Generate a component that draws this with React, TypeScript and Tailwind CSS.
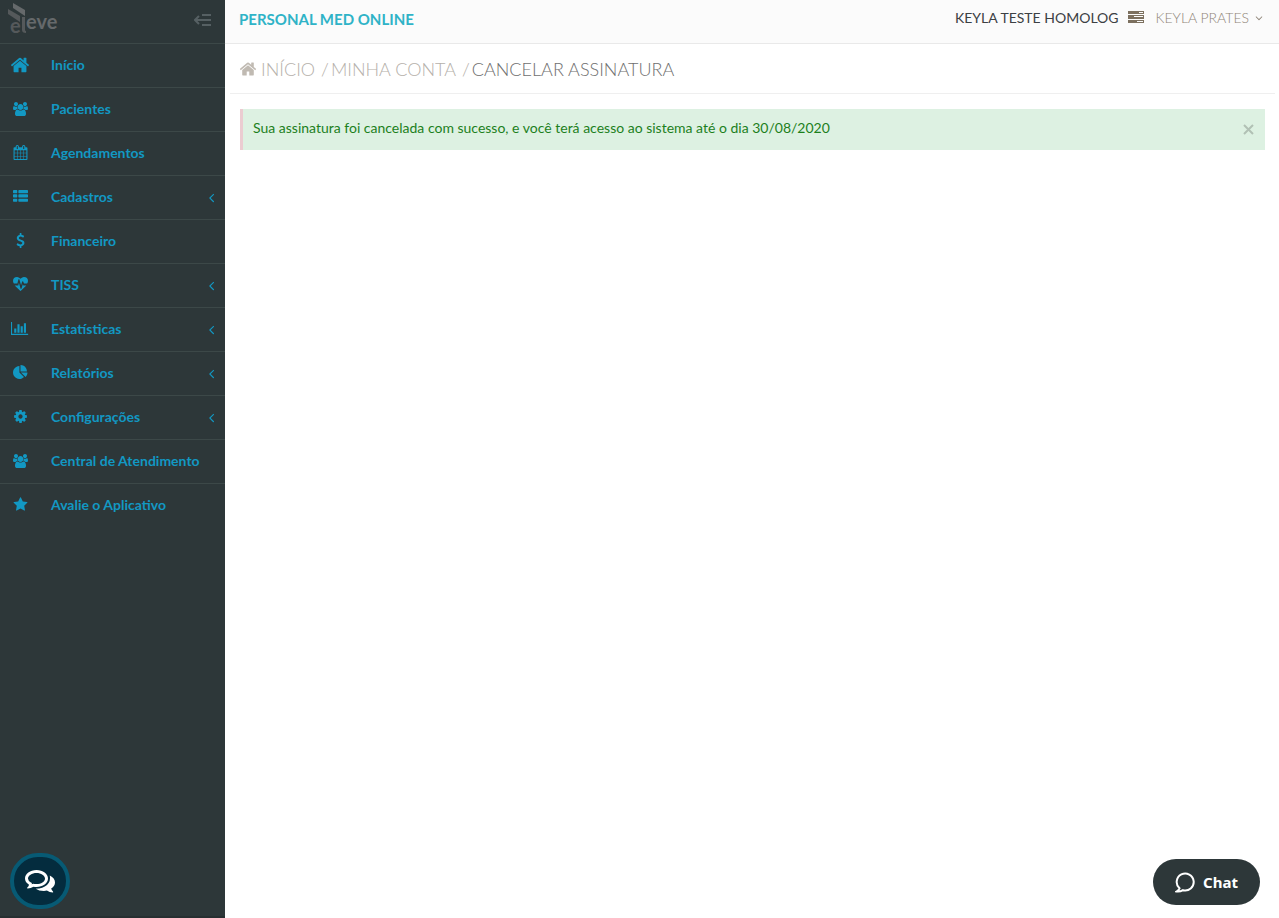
import clsx from 'clsx';

interface IconProps {
	path: string;
	width?: number;
	className?: string;
}

interface NavItem {
	label: string;
	icon: string;
	iconWidth?: number;
	iconClass?: string;
	expandable?: boolean;
}

const HOME =
	'M1472 992v480q0 26-19 45t-45 19h-384v-384h-256v384h-384q-26 0-45-19t-19-45v-480q0-1 .5-3t.5-3l575-474 575 474q1 2 1 6zm223-69l-62 74q-8 9-21 11h-3q-13 0-21-7l-692-577-692 577q-12 8-24 7-13-2-21-11l-62-74q-8-10-7-23.5t11-21.5l719-599q32-26 76-26t76 26l244 204v-195q0-14 9-23t23-9h192q14 0 23 9t9 23v408l219 182q10 8 11 21.5t-7 23.5z';
const USERS =
	'M593 896q-162 5-265 128h-134q-82 0-138-40.5t-56-118.5q0-353 124-353 6 0 43.5 21t97.5 42.5 119 21.5q67 0 133-23-5 37-5 66 0 139 81 256zm1071 637q0 120-73 189.5t-194 69.5h-874q-121 0-194-69.5t-73-189.5q0-53 3.5-103.5t14-109 26.5-108.5 43-97.5 62-81 85.5-53.500 111.500-20q10 0 43 21.500t73 48 107 48 135 21.500 135-21.500 107-48 73-48 43-21.500q61 0 111.500 20t85.500 53.500 62 81 43 97.500 26.500 108.500 14 109 3.500 103.500zm-1024-1277q0 106-75 181t-181 75-181-75-75-181 75-181 181-75 181 75 75 181zm704 384q0 159-112.500 271.500t-271.500 112.500-271.500-112.500-112.500-271.500 112.500-271.500 271.500-112.500 271.500 112.500 112.500 271.500zm576 225q0 78-56 118.500t-138 40.500h-134q-103-123-265-128 81-117 81-256 0-29-5-66 66 23 133 23 59 0 119-21.500t97.500-42.500 43.500-21q124 0 124 353zm-128-609q0 106-75 181t-181 75-181-75-75-181 75-181 181-75 181 75 75 181z';
const CALENDAR =
	'M192 1664h288v-288h-288v288zm352 0h320v-288h-320v288zm-352-352h288v-320h-288v320zm352 0h320v-320h-320v320zm-352-384h288v-288h-288v288zm736 736h320v-288h-320v288zm-384-736h320v-288h-320v288zm768 736h288v-288h-288v288zm-384-352h320v-320h-320v320zm-352-864v-288q0-13-9.5-22.5t-22.5-9.5h-64q-13 0-22.5 9.5t-9.5 22.5v288q0 13 9.5 22.5t22.5 9.5h64q13 0 22.5-9.5t9.5-22.5zm736 864h288v-320h-288v320zm-384-384h320v-288h-320v288zm384 0h288v-288h-288v288zm32-480v-288q0-13-9.5-22.5t-22.5-9.5h-64q-13 0-22.5 9.5t-9.5 22.5v288q0 13 9.5 22.5t22.5 9.5h64q13 0 22.5-9.5t9.5-22.5zm384-64v1280q0 52-38 90t-90 38h-1408q-52 0-90-38t-38-90v-1280q0-52 38-90t90-38h128v-96q0-66 47-113t113-47h64q66 0 113 47t47 113v96h384v-96q0-66 47-113t113-47h64q66 0 113 47t47 113v96h128q52 0 90 38t38 90z';
const LIST =
	'M512 1248v192q0 40-28 68t-68 28h-320q-40 0-68-28t-28-68v-192q0-40 28-68t68-28h320q40 0 68 28t28 68zm0-512v192q0 40-28 68t-68 28h-320q-40 0-68-28t-28-68v-192q0-40 28-68t68-28h320q40 0 68 28t28 68zm1280 512v192q0 40-28 68t-68 28h-960q-40 0-68-28t-28-68v-192q0-40 28-68t68-28h960q40 0 68 28t28 68zm-1280-1024v192q0 40-28 68t-68 28h-320q-40 0-68-28t-28-68v-192q0-40 28-68t68-28h320q40 0 68 28t28 68zm1280 512v192q0 40-28 68t-68 28h-960q-40 0-68-28t-28-68v-192q0-40 28-68t68-28h960q40 0 68 28t28 68zm0-512v192q0 40-28 68t-68 28h-960q-40 0-68-28t-28-68v-192q0-40 28-68t68-28h960q40 0 68 28t28 68z';
const DOLLAR =
	'M1362 1185q0 153-99.5 263.5t-258.5 136.5v175q0 14-9 23t-23 9h-135q-13 0-22.5-9.5t-9.5-22.5v-175q-66-9-127.5-31t-101.5-44.5-74-48-46.5-37.5-17.5-18q-17-21-2-41l103-135q7-10 23-12 15-2 24 9l2 2q113 99 243 125 37 8 74 8 81 0 142.5-43t61.5-122q0-28-15-53t-33.5-42-58.5-37.5-66-32-80-32.5q-39-16-61.5-25t-61.5-26.5-62.5-31-56.5-35.5-53.5-42.5-43.5-49-35.5-58-21-66.5-8.5-78q0-138 98-242t255-134v-180q0-13 9.5-22.5t22.5-9.5h135q14 0 23 9t9 23v176q57 6 110.5 23t87 33.5 63.5 37.5 39 29 15 14q17 18 5 38l-81 146q-8 15-23 16-14 3-27-7-3-3-14.5-12t-39-26.5-58.5-32-74.5-26-85.5-11.5q-95 0-155 43t-60 111q0 26 8.5 48t29.5 41.5 39.5 33 56 31 60.5 27 70 27.5q53 20 81 31.5t76 35 75.5 42.5 62 50 53 63.5 31.5 76.5 13 94z';
const HEARTBEAT =
	'M1280 1024h305q-5 6-10 10.5t-9 7.5l-3 4-623 600q-18 18-44 18t-44-18l-624-602q-5-2-21-20h369q22 0 39.5-13.5t22.5-34.5l70-281 190 667q6 20 23 33t39 13q21 0 38-13t23-33l146-485 56 112q18 35 57 35zm512-556q0 145-103 300h-369l-111-221q-8-17-25.5-27t-36.5-8q-45 5-56 46l-129 430-196-686q-6-20-23.5-33t-39.5-13-39 13.5-22 34.5l-116 464h-423q-103-155-103-300 0-220 127-344t351-124q62 0 126.5 21.5t120 58 95.5 68.5 76 68q36-36 76-68t95.5-68.5 120-58 126.5-21.5q224 0 351 124t127 344z';
const BAR_CHART =
	'M640 896v512h-256v-512h256zm384-512v1024h-256v-1024h256zm1024 1152v128h-2048v-1536h128v1408h1920zm-640-896v768h-256v-768h256zm384-384v1152h-256v-1152h256z';
const PIE_CHART =
	'M768 890l546 546q-106 108-247.5 168t-298.5 60q-209 0-385.5-103t-279.5-279.5-103-385.5 103-385.5 279.5-279.5 385.5-103v762zm187 6h773q0 157-60 298.5t-168 247.5zm709-128h-768v-768q209 0 385.5 103t279.5 279.5 103 385.5z';
const COG =
	'M1152 896q0-106-75-181t-181-75-181 75-75 181 75 181 181 75 181-75 75-181zm512-109v222q0 12-8 23t-20 13l-185 28q-19 54-39 91 35 50 107 138 10 12 10 25t-9 23q-27 37-99 108t-94 71q-12 0-26-9l-138-108q-44 23-91 38-16 136-29 186-7 28-36 28h-222q-14 0-24.5-8.5t-11.5-21.5l-28-184q-49-16-90-37l-141 107q-10 9-25 9-14 0-25-11-126-114-165-168-7-10-7-23 0-12 8-23 15-21 51-66.5t54-70.5q-27-50-41-99l-183-27q-13-2-21-12.5t-8-23.5v-222q0-12 8-23t19-13l186-28q14-46 39-92-40-57-107-138-10-12-10-24 0-10 9-23 26-36 98.5-107.5t94.5-71.5q13 0 26 10l138 107q44-23 91-38 16-136 29-186 7-28 36-28h222q14 0 24.5 8.5t11.5 21.5l28 184q49 16 90 37l142-107q9-9 24-9 13 0 25 10 129 119 165 170 7 8 7 22 0 12-8 23-15 21-51 66.5t-54 70.5q26 50 41 98l183 28q13 2 21 12.5t8 23.5z';
const STAR =
	'M1728 647q0 22-26 48l-363 354 86 500q1 7 1 20 0 21-10.5 35.5t-30.5 14.5q-19 0-40-12l-449-236-449 236q-22 12-40 12-21 0-31.5-14.5t-10.5-35.5q0-6 2-20l86-500-364-354q-25-27-25-48 0-37 56-46l502-73 225-455q19-41 49-41t49 41l225 455 502 73q56 9 56 46z';
const ANGLE_LEFT =
	'M1203 544q0 13-10 23l-393 393 393 393q10 10 10 23t-10 23l-50 50q-10 10-23 10t-23-10l-466-466q-10-10-10-23t10-23l466-466q10-10 23-10t23 10l50 50q10 10 10 23z';
const ANGLE_DOWN =
	'M1395 736q0 13-10 23l-466 466q-10 10-23 10t-23-10l-466-466q-10-10-10-23t10-23l50-50q10-10 23-10t23 10l393 393 393-393q10-10 23-10t23 10l50 50q10 10 10 23z';

const navItems: NavItem[] = [
	{ label: 'Início', icon: HOME, iconClass: 'h-5' },
	{ label: 'Pacientes', icon: USERS, iconWidth: 1920, iconClass: 'h-[14px]' },
	{ label: 'Agendamentos', icon: CALENDAR },
	{ label: 'Cadastros', icon: LIST, expandable: true },
	{ label: 'Financeiro', icon: DOLLAR },
	{ label: 'TISS', icon: HEARTBEAT, expandable: true },
	{ label: 'Estatísticas', icon: BAR_CHART, iconWidth: 2048, expandable: true },
	{ label: 'Relatórios', icon: PIE_CHART, expandable: true },
	{ label: 'Configurações', icon: COG, expandable: true },
	{ label: 'Central de Atendimento', icon: USERS, iconWidth: 1920, iconClass: 'h-[14px]' },
	{ label: 'Avalie o Aplicativo', icon: STAR },
];

function Icon({ path, width = 1792, className }: IconProps) {
	return (
		<svg
			aria-hidden="true"
			viewBox={`0 0 ${width} 1792`}
			fill="currentColor"
			className={clsx('w-auto shrink-0', className)}
		>
			<path d={path} />
		</svg>
	);
}

function Logo() {
	return (
		<svg role="img" aria-label="eleve" viewBox="0 0 54 40" className="h-10 w-[54px]" fill="#65696b">
			<path d="M5 1 17 8v6L5 6z" />
			<path d="M0 7l12 7v6L0 12z" fill="#55595b" />
			<g fontFamily="Lato, sans-serif" fontWeight="700" fontSize="20">
				<text x="2" y="31" fill="#55595b">e</text>
				<text x="18" y="27">eve</text>
			</g>
			<path d="M14 15h3v13q0 1 1 1v2q-4 0-4-3z" fill="#55595b" />
		</svg>
	);
}

function Sidebar() {
	return (
		<aside className="flex w-[225px] shrink-0 flex-col border-b-2 border-[#272f31] bg-[#2d3739]">
			<div className="flex h-[43px] items-start justify-between pt-[2px] pr-[14px] pl-2">
				<Logo />
				<button type="button" aria-label="Recolher menu" className="mt-[11px] text-[#566063]">
					<svg viewBox="0 0 17 14" className="h-[14px] w-[17px]" fill="none" stroke="currentColor" strokeWidth="2">
						<path d="M8 2h9M7 7h10M8 12h9M1 7h6M5 3 1 7l4 4" />
					</svg>
				</button>
			</div>
			<nav aria-label="Menu principal">
				<ul>
					{navItems.map((item) => (
						<li key={item.label} className="border-t border-[#3c4848]">
							<a href="#" className="flex h-[43px] items-center pr-[10px] pb-[2px] text-[14px] font-bold text-[#1298c3]">
								<span className="flex w-10 shrink-0 justify-center">
									<Icon path={item.icon} width={item.iconWidth} className={item.iconClass ?? 'h-[15px]'} />
								</span>
								<span className="flex-1 pl-[11px] whitespace-nowrap">{item.label}</span>
								{item.expandable && <Icon path={ANGLE_LEFT} className="mt-[2px] -mr-1 h-[15px]" />}
							</a>
						</li>
					))}
				</ul>
			</nav>
		</aside>
	);
}

function Header() {
	return (
		<header className="flex h-11 items-start justify-between border-b border-[#e9e9e9] bg-[#fbfbfb] pr-[14px] pl-[14px]">
			<h1 className="pt-[9px] text-[15px] leading-5 font-bold text-[#2fb3c7]">PERSONAL MED ONLINE</h1>
			<div className="flex items-center pt-2 text-[14px] leading-5">
				<span className="text-[#3c4043]">KEYLA TESTE HOMOLOG</span>
				<button type="button" aria-label="Servidores" className="mr-3 mb-[2px] ml-[9px] text-[#7c705f]">
					<svg viewBox="0 0 16 12" className="h-3 w-4" fill="currentColor">
						<path d="M0 0h16v3H0zM0 4h16v4H0zM0 9h16v3H0z" />
						<path d="M11 1h4v1h-4zM6 5h9v1H6zM9 10h6v1H9z" fill="#fbfbfb" />
					</svg>
				</button>
				<button type="button" className="flex items-center gap-1 font-light text-[#8f8578]">
					KEYLA PRATES
					<Icon path={ANGLE_DOWN} className="h-3" />
				</button>
			</div>
		</header>
	);
}

function Breadcrumb() {
	return (
		<nav
			aria-label="Trilha"
			className="mr-1 ml-[5px] border-b border-[#efefef] pt-3 pb-[11px] pl-[9px] text-[18px] leading-[26px] font-light"
		>
			<ol className="flex text-[#b5b0aa]">
				<li>
					<a href="#" className="flex items-center gap-1">
						<Icon path={HOME} className="h-[18px] text-[#c0bab2]" />
						INÍCIO
					</a>
				</li>
				<li className="ml-1.5 flex gap-0.5">
					<span aria-hidden="true">/</span>
					<a href="#">MINHA CONTA</a>
				</li>
				<li className="ml-1.5 flex gap-0.5">
					<span aria-hidden="true">/</span>
					<span aria-current="page" className="text-[#6f6f6f]">
						CANCELAR ASSINATURA
					</span>
				</li>
			</ol>
		</nav>
	);
}

export default function App() {
	return (
		<div className="flex min-h-screen bg-white font-[Lato,sans-serif]">
			<Sidebar />
			<div className="min-w-0 flex-1">
				<Header />
				<main>
					<Breadcrumb />
					<div
						role="status"
						className="mt-[15px] mr-[14px] ml-[15px] flex min-h-[41px] items-start justify-between border-l-[3px] border-[#ebccd1] bg-[#ddf1e2] pt-[9px] pr-[11px] pb-3 pl-[10px] text-[14px] leading-5 text-[#1c801c]"
					>
						<p>Sua assinatura foi cancelada com sucesso, e você terá acesso ao sistema até o dia 30/08/2020</p>
						<button type="button" aria-label="Fechar" className="mt-[6px] text-[#b1c1b5]">
							<svg viewBox="0 0 11 11" className="size-[11px]" fill="none" stroke="currentColor" strokeWidth="2">
								<path d="m1 1 9 9M10 1l-9 9" />
							</svg>
						</button>
					</div>
				</main>
			</div>
			<button
				type="button"
				aria-label="Conversas"
				className="fixed bottom-[9px] left-[10px] flex h-14 w-[60px] items-center justify-center rounded-full border-4 border-[#075a74] bg-[#042c3e] text-white"
			>
				<svg viewBox="0 0 30 23" className="h-[23px] w-[30px]" fill="currentColor">
					<path
						fillRule="evenodd"
						d="M11.500 0C17.900 0 23 3.800 23 8.500S17.900 17 11.500 17q-1.500 0-3-.3Q5.500 18.600 2.500 18.500q-.8-.3-.2-1 1.500-1.300 1.700-2.800Q0 12.200 0 8.500C0 3.800 5.100 0 11.500 0zm0 2.900C6.900 2.900 3 5.400 3 8.500q0 2.200 2.900 3.900l1.100.7-.4 1.200 1.700-.5 1.200.1q1 .2 2 .2c4.600 0 8.500-2.500 8.500-5.600s-3.900-5.600-8.500-5.600z"
					/>
					<path d="M24.800 5.500Q30 8.200 30 12.500q0 3.600-3.800 6 .3 1.600 1.800 2.900.6.800-.3 1.100-3 0-5.800-1.900-1.500.3-3 .3-5 0-8.200-2.200Q18 18.500 22 15q4-4 2.800-9.500z" />
				</svg>
			</button>
			<button
				type="button"
				className="fixed right-[19px] bottom-[13px] flex h-[46px] w-[107px] items-center justify-center gap-2 rounded-full bg-[#2d3739] font-['Noto_Sans',sans-serif] text-[15px] font-bold text-white"
			>
				<svg viewBox="0 0 20 21" className="h-[21px] w-5" fill="none" stroke="currentColor" strokeWidth="2">
					<path d="M4.500 16.300A8.500 8.500 0 1 1 8 18.200Q5 20 1.500 19.500 3.800 18.200 4.500 16.300z" />
				</svg>
				Chat
			</button>
		</div>
	);
}
